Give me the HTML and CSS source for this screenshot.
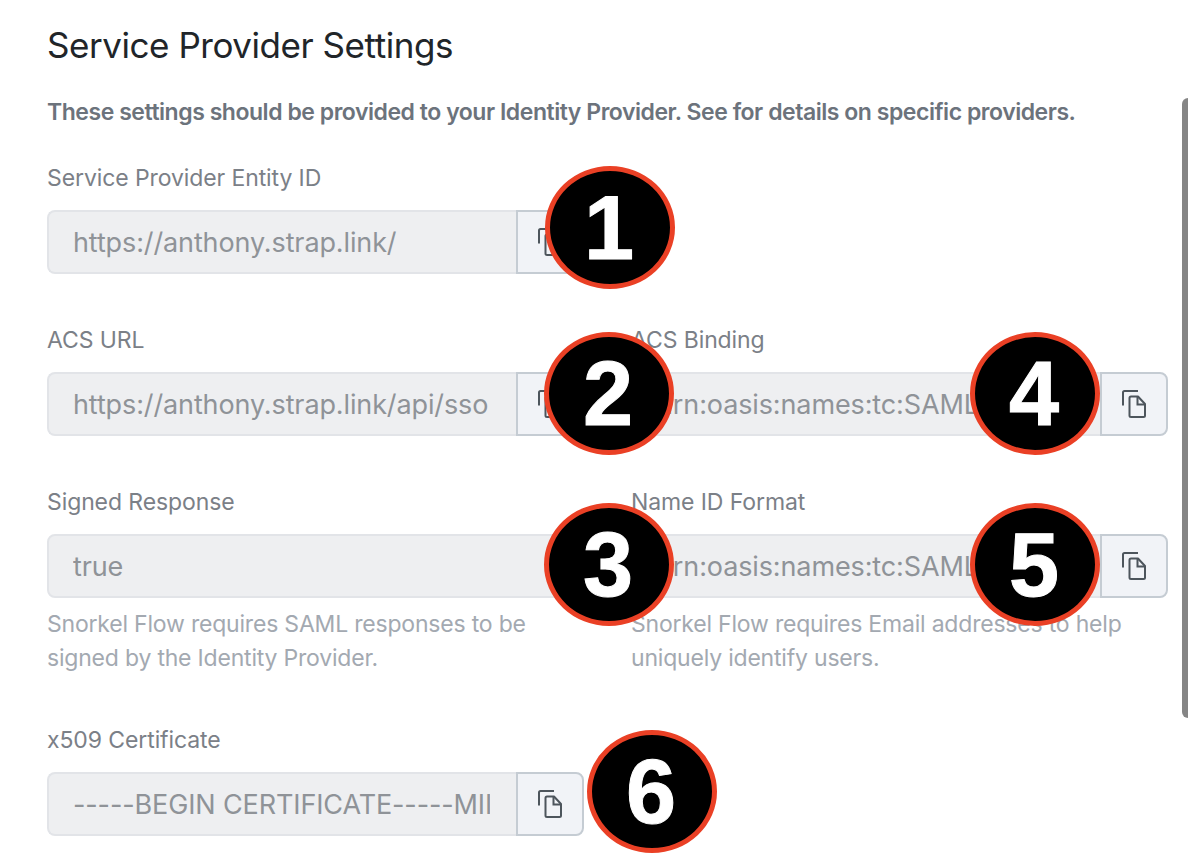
FILE: index.html
```html
<!DOCTYPE html>
<html lang="en">
<head>
<meta charset="utf-8">
<title>Service Provider Settings</title>
<link rel="stylesheet" href="styles.css">
</head>
<body>
<svg class="sprite" width="0" height="0" aria-hidden="true">
  <symbol id="copy" viewBox="0 0 24 28">
    <path d="M1 15.500V2.500A1.500 1.500 0 0 1 2.500 1H16" fill="none" stroke="currentColor" stroke-width="2"/>
    <path d="M9 6.500H16L23 14V25.500A1.500 1.500 0 0 1 21.500 27H9A1.500 1.500 0 0 1 7.500 25.500V8A1.500 1.500 0 0 1 9 6.500Z" fill="none" stroke="currentColor" stroke-width="2" stroke-linejoin="round"/>
    <path d="M15.500 6.500V14.500H23" fill="none" stroke="currentColor" stroke-width="2"/>
  </symbol>
</svg>
<main class="page">
  <h1 class="title">Service Provider Settings</h1>
  <p class="lead">These settings should be provided to your Identity Provider. See for details on specific providers.</p>

  <div class="grid">
    <div class="field">
      <label class="label">Service Provider Entity ID</label>
      <div class="control">
        <div class="value"><span class="value-text">https://anthony.strap.link/</span></div>
        <button class="copy"><svg class="icon"><use href="#copy"/></svg></button>
      </div>
    </div>
    <div></div>

    <div class="field">
      <label class="label">ACS URL</label>
      <div class="control">
        <div class="value"><span class="value-text">https://anthony.strap.link/api/sso</span></div>
        <button class="copy"><svg class="icon"><use href="#copy"/></svg></button>
      </div>
    </div>
    <div class="field">
      <label class="label">ACS Binding</label>
      <div class="control">
        <div class="value"><span class="value-text">urn:oasis:names:tc:SAML:2.0:bindings</span></div>
        <button class="copy"><svg class="icon"><use href="#copy"/></svg></button>
      </div>
    </div>

    <div class="field">
      <label class="label">Signed Response</label>
      <div class="control">
        <div class="value value-full"><span class="value-text">true</span></div>
      </div>
      <p class="help">Snorkel Flow requires SAML responses to be signed by the Identity Provider.</p>
    </div>
    <div class="field">
      <label class="label">Name ID Format</label>
      <div class="control">
        <div class="value"><span class="value-text">urn:oasis:names:tc:SAML:1.1:nameid</span></div>
        <button class="copy"><svg class="icon"><use href="#copy"/></svg></button>
      </div>
      <p class="help">Snorkel Flow requires Email addresses to help uniquely identify users.</p>
    </div>

    <div class="field">
      <label class="label">x509 Certificate</label>
      <div class="control">
        <div class="value"><span class="value-text">-----BEGIN CERTIFICATE-----MIIEpDCCA</span></div>
        <button class="copy"><svg class="icon"><use href="#copy"/></svg></button>
      </div>
    </div>
  </div>
</main>

<div class="scrollbar"></div>
<div class="badge b1">1</div>
<div class="badge b2">2</div>
<div class="badge b3">3</div>
<div class="badge b4">4</div>
<div class="badge b5">5</div>
<div class="badge b6">6</div>
</body>
</html>
```
FILE: styles.css
```css
* { box-sizing: border-box; }
html, body { margin: 0; height: 860px; overflow: hidden; background: #fff; }
body { font-family: Inter, "Liberation Sans", sans-serif; position: relative; }
.sprite { position: absolute; }
.page { padding: 24px 20px 0 47px; }
.title { margin: 0; font-size: 35px; line-height: 42px; font-weight: 400; letter-spacing: -0.45px; color: #212529; }
.lead { margin: 31px 0 0; font-size: 23px; line-height: 30px; font-weight: 600; letter-spacing: -0.46px; color: #6c737c; white-space: nowrap; }
.grid { display: grid; grid-template-columns: 537px 537px; column-gap: 47px; margin-top: 36px; }
.field { min-width: 0; padding-bottom: 51px; }
.label { display: block; font-size: 23px; line-height: 30px; letter-spacing: -0.1px; color: #7b8087; margin-bottom: 17px; }
.control { display: flex; height: 64px; }
.value { flex: 1; min-width: 0; padding: 0 26px 0 24px; background: #eeeff1; border: 2px solid #e2e4e8; border-right: 0; border-radius: 8px 0 0 8px; font-size: 27px; line-height: 62px; letter-spacing: -0.12px; color: #8f9398; }
.value-text { display: block; overflow: hidden; white-space: nowrap; }
.value-full { border-right: 2px solid #e2e4e8; border-radius: 8px; }
.copy { flex: 0 0 68px; padding: 0; display: flex; align-items: center; justify-content: center; background: #f1f3f7; border: 2px solid #c5ccd3; border-radius: 0 8px 8px 0; color: #4d555c; }
.icon { width: 24px; height: 28px; }
.help { margin: 9px 0 -1px; font-size: 23px; line-height: 34px; letter-spacing: -0.2px; color: #a3a9b1; }
.scrollbar { position: absolute; left: 1182px; top: 98px; width: 6px; height: 620px; background: #858585; border-radius: 6px 0 0 6px; }
.badge { position: absolute; width: 130px; height: 123px; padding-right: 2px; display: flex; align-items: center; justify-content: center; border-radius: 50%; background: #000; border: 5px solid #ea4025; color: #fff; font-family: "Liberation Sans", sans-serif; font-weight: 700; font-size: 90px; line-height: 1; -webkit-text-stroke: 1px #fff; }
.b1 { left: 545px; top: 166px; }
.b2 { left: 544px; top: 332px; }
.b3 { left: 544px; top: 503px; }
.b4 { left: 970px; top: 332px; }
.b5 { left: 970px; top: 503px; }
.b6 { left: 587px; top: 730px; }
```
